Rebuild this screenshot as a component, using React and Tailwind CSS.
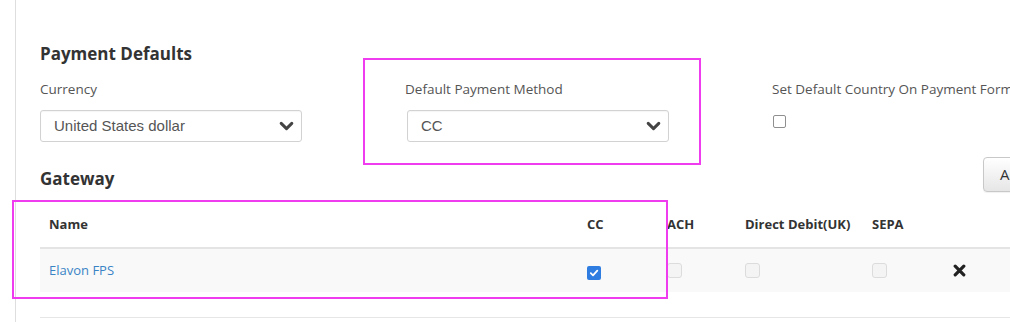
import React from "react";

const Chevron = () => (
  <svg width="15" height="10" viewBox="0 0 15 10" className="shrink-0">
    <path d="M2.2 2.4 L7.5 7.6 L12.8 2.4" fill="none" stroke="#444" strokeWidth="3" strokeLinecap="round" strokeLinejoin="round" />
  </svg>
);

const Select = ({ value }) => (
  <div className="flex h-[32px] w-[262px] items-center justify-between rounded-[3px] border border-[#d2d2d2] bg-white pl-[13px] pr-[7px] font-['Liberation_Sans',sans-serif] text-[15px] text-[#555] shadow-[inset_0_1px_1px_rgba(0,0,0,0.04)]">
    <span>{value}</span>
    <Chevron />
  </div>
);

const Box = ({ checked, disabled }) =>
  checked ? (
    <span className="inline-flex h-[14px] w-[14px] items-center justify-center rounded-[2px] bg-[#2f7de1]">
      <svg width="10" height="10" viewBox="0 0 10 10">
        <path d="M1.8 5.2 L4 7.3 L8.3 2.6" fill="none" stroke="white" strokeWidth="1.8" strokeLinecap="round" strokeLinejoin="round" />
      </svg>
    </span>
  ) : (
    <span
      className={
        disabled
          ? "inline-block h-[15px] w-[15px] rounded-[3px] border border-[#dcdcdc] bg-[#f4f4f4]"
          : "inline-block h-[13px] w-[13px] rounded-[2px] border border-[#8f8f8f] bg-white"
      }
    />
  );

const Times = () => (
  <svg width="13" height="13" viewBox="0 0 13 13">
    <path d="M2.2 2.2 L10.8 10.8 M10.8 2.2 L2.2 10.8" stroke="#222" strokeWidth="3.2" strokeLinecap="round" />
  </svg>
);

export default function App() {
  return (
    <div className="relative h-[322px] w-[1010px] overflow-hidden bg-white font-['Open_Sans',sans-serif]">
      <div className="ml-[15px] h-full border-l border-[#dedede] pl-[24px] pt-[43px]">
        <div className="w-[1054px]">
          <h3 className="text-[17px] font-bold leading-[22px] text-[#333]">Payment Defaults</h3>

          <div className="mt-[15px] grid grid-cols-[366px_366px_1fr]">
            <div>
              <div className="text-[13.5px] leading-[18px] text-[#555]">Currency</div>
              <div className="mt-[12px]">
                <Select value="United States dollar" />
              </div>
            </div>
            <div>
              <div className="-ml-[1px] text-[13.5px] leading-[18px] text-[#555]">Default Payment Method</div>
              <div className="mt-[12px] ml-[1px]">
                <Select value="CC" />
              </div>
            </div>
            <div>
              <div className="whitespace-nowrap text-[13.5px] leading-[18px] text-[#555]">
                Set Default Country On Payment Form
              </div>
              <div className="mt-[17px] flex pl-[1px]">
                <Box />
              </div>
            </div>
          </div>

          <div className="mt-[15px] flex items-end justify-between">
            <h3 className="pb-[2px] text-[17px] font-bold leading-[22px] text-[#333]">Gateway</h3>
            <button className="h-[35px] w-[111px] rounded-[4px] border border-[#c8c8c8] bg-gradient-to-b from-white to-[#e6e6e6] pl-[16px] text-left text-[15px] whitespace-nowrap text-[#333] shadow-[0_1px_1px_rgba(0,0,0,0.06)]">
              Add Gateway
            </button>
          </div>

          <table className="mt-[8px] w-full table-fixed border-collapse text-[13px]">
            <colgroup>
              <col className="w-[538px]" />
              <col className="w-[80px]" />
              <col className="w-[78px]" />
              <col className="w-[127px]" />
              <col className="w-[81px]" />
              <col />
            </colgroup>
            <thead>
              <tr className="h-[48px] border-b-2 border-[#e4e4e4] text-left font-bold text-[#333]">
                <th className="pl-[9px] pt-[3px]">Name</th>
                <th className="pl-[9px] pt-[3px]">CC</th>
                <th className="pl-[9px] pt-[3px]">ACH</th>
                <th className="pl-[9px] pt-[3px]">Direct Debit(UK)</th>
                <th className="pl-[9px] pt-[3px]">SEPA</th>
                <th />
              </tr>
            </thead>
            <tbody>
              <tr className="h-[44px] bg-[#f9f9f9]">
                <td className="pl-[9px] text-[#3a84c6]">Elavon FPS</td>
                <td className="pl-[9px] pt-[6px]"><Box checked /></td>
                <td className="pl-[9px] pt-[6px]"><Box disabled /></td>
                <td className="pl-[9px] pt-[6px]"><Box disabled /></td>
                <td className="pl-[9px] pt-[6px]"><Box disabled /></td>
                <td className="pl-[9px]"><Times /></td>
              </tr>
            </tbody>
          </table>
          <div className="mt-[25px] border-t border-[#e6e6e6]" />
        </div>
      </div>

      <div className="pointer-events-none absolute left-[363px] top-[58px] h-[107px] w-[338px] border-2 border-[#ee3cee]" />
      <div className="pointer-events-none absolute left-[12px] top-[200px] h-[99px] w-[656px] border-2 border-[#ee3cee]" />
    </div>
  );
}
